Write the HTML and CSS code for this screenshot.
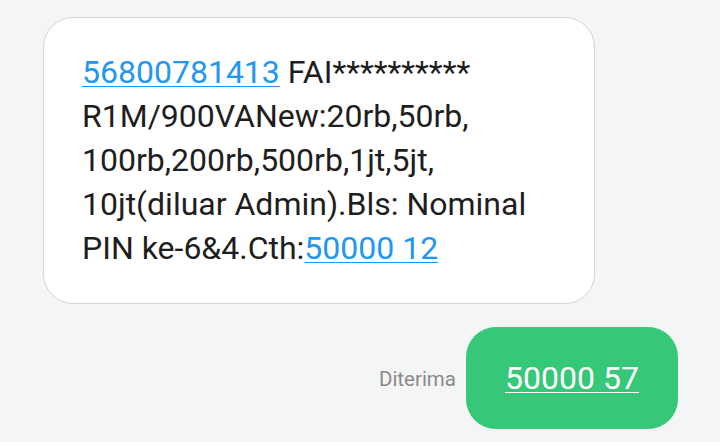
FILE: index.html
```html
<!DOCTYPE html>
<html>
<head>
  <title>Pesan</title>
  <link rel="stylesheet" href="styles.css">
</head>
<body>

<div class="thread">
  <!-- pesan masuk -->
  <div class="row in">
    <div class="bubble in-bubble">
      <a href="#">56800781413</a> FAI**********<br>
      R1M/900VANew:20rb,50rb,<br>
      100rb,200rb,500rb,1jt,5jt,<br>
      10jt(diluar Admin).Bls: Nominal<br>
      PIN ke-6&amp;4.Cth:<a href="#">50000 12</a>
    </div>
  </div>

  <!-- pesan keluar -->
  <div class="row out">
    <span class="status">Diterima</span>
    <div class="bubble out-bubble"><a href="#">50000 57</a></div>
  </div>
</div>

</body>
</html>
```

FILE: styles.css
```css
body { margin: 0; background: #f4f5f5; font-family: Roboto, "Liberation Sans", sans-serif; color: #1e1e1e; }
.thread { padding: 17px 43px 0 43px; }
.row { display: flex; }
.row.out { justify-content: flex-end; align-items: center; margin-top: 23px; margin-right: -1px; }
.bubble { font-size: 32px; line-height: 44px; }
.in-bubble { width: 472px; padding: 32px 40px 33px 38px; background: #fff; border: 1px solid #d3d4d4; border-radius: 30px; }
.in-bubble a { color: #2196f3; text-decoration: underline; text-underline-offset: 3px; text-decoration-thickness: 1px; }
.status { font-size: 20.5px; color: #8a8a8a; margin-right: 10px; margin-top: 2px; }
.out-bubble { background: #36c878; border-radius: 30px; width: 212px; height: 102px; display: flex; align-items: center; justify-content: center; }
.out-bubble a { color: #fff; text-decoration: underline; text-underline-offset: 3px; text-decoration-thickness: 1px; }
```
